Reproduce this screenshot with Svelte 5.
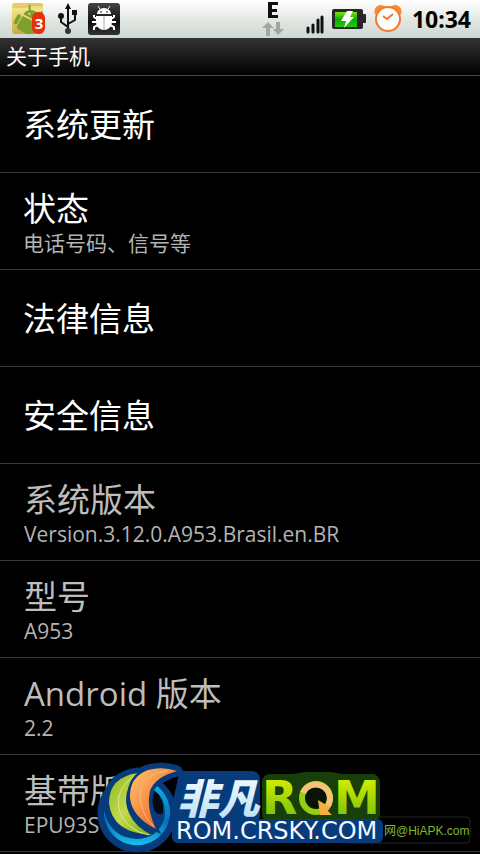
<script lang="ts">
  interface Item {
    title: string;
    summary?: string;
    info?: boolean;
  }

  const items: Item[] = [
    { title: '系统更新' },
    { title: '状态', summary: '电话号码、信号等' },
    { title: '法律信息' },
    { title: '安全信息' },
    { title: '系统版本', summary: 'Version.3.12.0.A953.Brasil.en.BR', info: true },
    { title: '型号', summary: 'A953', info: true },
    { title: 'Android 版本', summary: '2.2', info: true },
    { title: '基带版本', summary: 'EPU93ST', info: true },
  ];
</script>

<div class="phone">
  <header class="status-bar">
    <div class="notifications">
      <svg width="36" height="36" viewBox="0 0 36 36">
        <defs>
          <linearGradient id="folder" x1="0" y1="0" x2="0" y2="1">
            <stop offset="0" stop-color="#e5c65e" />
            <stop offset=".2" stop-color="#f2e489" />
            <stop offset="1" stop-color="#c8ab3c" />
          </linearGradient>
          <clipPath id="folder-clip"><rect y="2" width="31" height="31" rx="3" /></clipPath>
        </defs>
        <rect x="0" y="2" width="31" height="31" rx="3" fill="url(#folder)" />
        <path d="M1 6H14L17 4H31" fill="none" stroke="#d9b64e" />
        <g clip-path="url(#folder-clip)">
          <g fill="#819f2c" transform="rotate(28 18 20)">
            <path d="M9 17a9 8 0 0 1 18 0z" />
            <path d="M9 19h18v11a3 3 0 0 1-3 3h-12a3 3 0 0 1-3-3z" />
            <rect x="4" y="19" width="4" height="11" rx="2" />
            <path d="M13 11L10 6M22 11L25 6" stroke="#819f2c" stroke-width="2" />
            <circle cx="14" cy="14" r="1" fill="#f2e489" />
            <circle cx="21" cy="14" r="1" fill="#f2e489" />
          </g>
        </g>
        <rect x="20" y="11" width="13" height="22" rx="6" fill="#e5300b" />
        <text x="27" y="28" text-anchor="middle" class="badge">3</text>
      </svg>
      <svg width="20" height="32" viewBox="0 0 20 32" fill="none" stroke="#111" stroke-width="2">
        <path d="M10 4V28M10 24L3 19V13M10 21L17 17V11" />
        <path d="M10 0L13 6H7zM14 7h5v5h-5z" fill="#111" stroke="none" />
        <circle cx="3" cy="13" r="3" fill="#111" stroke="none" />
        <circle cx="10" cy="28" r="3" fill="#333" stroke="none" />
      </svg>
      <svg width="32" height="32" viewBox="0 0 32 32">
        <defs>
          <linearGradient id="debug" x1="0" y1="0" x2="0" y2="1">
            <stop offset="0" stop-color="#444" />
            <stop offset=".6" stop-color="#111" />
            <stop offset="1" stop-color="#333" />
          </linearGradient>
        </defs>
        <rect width="32" height="32" rx="3" fill="url(#debug)" />
        <path d="M9 11a7 6 0 0 1 14 0zM8 13h16v6a8 8 0 0 1-16 0z" fill="#fff" />
        <path d="M12 6L10 3M20 6L22 3" stroke="#fff" />
        <path d="M9 16L6 14V12M23 16L26 14V12M9 19H4M23 19H28M10 22L6 24V27M22 22L26 24V27" fill="none" stroke="#fff" stroke-width="2" />
        <path d="M16 13V27" stroke="#aaa" />
        <path d="M12 9h2M18 9h2" stroke="#222" />
      </svg>
    </div>
    <div class="system">
      <svg width="24" height="38" viewBox="0 0 24 38">
        <path d="M6 2H16V5H10V9H15V12H10V15H16V18H6z" fill="#111" />
        <path d="M6 22L12 28H8V36H4V28H0zM14 22H18V29H22L16 35L11 29H14z" fill="#a3a6a3" />
      </svg>
      <svg class="signal" width="18" height="38" viewBox="0 0 18 38" stroke="#111" stroke-width="3" stroke-linecap="round">
        <path d="M2 28V32M7 25V32M12 20V32M16 17V32" />
      </svg>
      <svg width="34" height="38" viewBox="0 0 34 38">
        <defs>
          <linearGradient id="charge" x1="0" y1="0" x2="0" y2="1">
            <stop offset="0" stop-color="#7be311" />
            <stop offset=".5" stop-color="#10a80a" />
            <stop offset="1" stop-color="#22cc09" />
          </linearGradient>
        </defs>
        <rect x="0" y="9" width="31" height="20" rx="2" fill="#292529" />
        <rect x="30" y="14" width="4" height="9" rx="1" fill="#292529" />
        <rect x="3" y="12" width="22" height="15" fill="url(#charge)" />
        <path d="M15 11H21L18 17H22L12 28L14 21H9z" fill="#fff" />
      </svg>
      <svg width="28" height="38" viewBox="0 0 28 38">
        <path d="M2 12A5 5 0 0 1 9 7zM26 12A5 5 0 0 0 19 7z" fill="#fa8a2e" stroke="#fa8a2e" stroke-width="3" />
        <circle cx="14" cy="19" r="12" fill="#fff" stroke="#f27a2c" stroke-width="2" />
        <path d="M9 16L13 19L19 14" fill="none" stroke="#f27a2c" stroke-width="2" />
      </svg>
      <time>10:34</time>
    </div>
  </header>

  <h1>关于手机</h1>

  <ul>
    {#each items as item}
      <li class:info={item.info}>
        <span class="title">{item.title}</span>
        {#if item.summary}
          <span class="summary">{item.summary}</span>
        {/if}
      </li>
    {/each}
  </ul>

  <div class="watermark">
    <svg width="384" height="96" viewBox="96 758 384 96">
      <defs>
        <linearGradient id="green" x1="0" y1="0" x2="1" y2="1">
          <stop offset="0" stop-color="#8dbb20" />
          <stop offset=".5" stop-color="#c4da50" />
          <stop offset="1" stop-color="#72a80b" />
        </linearGradient>
        <linearGradient id="orange" x1="0" y1="0" x2="1" y2="1">
          <stop offset="0" stop-color="#ffc66d" />
          <stop offset=".5" stop-color="#f58b43" />
          <stop offset="1" stop-color="#d74a10" />
        </linearGradient>
        <linearGradient id="blue" x1="0" y1="0" x2="0" y2="1">
          <stop offset="0" stop-color="#08aee6" />
          <stop offset=".6" stop-color="#0670b8" />
          <stop offset="1" stop-color="#16c1ed" />
        </linearGradient>
        <linearGradient id="ice" x1="0" y1="0" x2="0" y2="1">
          <stop offset="0" stop-color="#fff" />
          <stop offset="1" stop-color="#b4def7" />
        </linearGradient>
        <linearGradient id="lime" x1="0" y1="0" x2="0" y2="1">
          <stop offset="0" stop-color="#e5f500" />
          <stop offset="1" stop-color="#69b90b" />
        </linearGradient>
      </defs>

      <rect x="345" y="817" width="125" height="26" rx="4" fill="#000" stroke="#252525" />
      <text x="384" y="835" class="site">网@HiAPK.com</text>

      <!-- Plates behind the lettering -->
      <path d="M186 779H252V815H178z" fill="#073b7b" stroke="#073b7b" stroke-width="16" stroke-linejoin="round" />
      <path d="M270 782H294L306 780H330L342 782H372V814H270z" fill="#183e09" stroke="#183e09" stroke-width="16" stroke-linejoin="round" />
      <path d="M178 825H377V837H178z" fill="#073b7b" stroke="#073b7b" stroke-width="12" stroke-linejoin="round" />

      <!-- Swirl -->
      <g fill="#073b7b" stroke="#073b7b" stroke-width="11" stroke-linejoin="round">
        <circle cx="137" cy="813" r="34" />
        <path d="M138 773Q109 777 109 803Q112 833 152 835z" />
        <path d="M177 771Q163 766 148 770Q129 777 130 798Q132 817 156 829Q146 808 150 791Q155 777 177 771z" />
      </g>
      <path d="M156 788Q164 798 163 813Q158 816 154 810Q150 798 156 788z" fill="#050a12" />
      <path d="M157 786A33 33 0 1 1 104 811Q111 838 137 839Q158 838 164 819Q168 801 154 790z" fill="url(#blue)" />
      <path d="M138 773Q109 777 109 803Q112 833 152 835Q135 827 129 813Q120 793 138 773z" fill="url(#green)" />
      <path d="M134 776Q112 792 121 815Q129 831 149 835" fill="none" stroke="#dfe984" />
      <path
        d="M177 771Q163 766 148 770Q129 777 130 798Q132 817 156 829Q146 808 150 791Q155 777 177 771z"
        fill="url(#orange)"
        stroke="#073b7b"
        stroke-width="5"
        paint-order="stroke"
      />
      <path d="M168 771Q143 773 140 792Q139 812 154 827" fill="none" stroke="#fbb878" />

      <text x="177" y="814" class="brand-cn">非凡</text>
      <text x="262" y="814" class="brand-en">R</text>
      <text x="334" y="814" class="brand-en">M</text>
      <circle cx="316" cy="798" r="14" fill="#0a1404" stroke="#94cf10" stroke-width="6" />
      <path d="M303 793A14 14 0 1 1 327 807" fill="none" stroke="#f3c477" stroke-width="6" />
      <path d="M318 800L320 815H332L328 811L330 807z" fill="#f5ae41" />
      <text x="176" y="839" class="domain">ROM.CRSKY.COM</text>
    </svg>
  </div>
</div>

<style>
  :global(body) {
    margin: 0;
    background: #000;
  }

  .phone {
    position: relative;
    height: 100vh;
    overflow: hidden;
    background: #000;
    color: #fff;
    font-family: 'Open Sans', 'Noto Sans CJK SC', sans-serif;
  }

  .status-bar {
    display: flex;
    justify-content: space-between;
    height: 38px;
    padding: 0 9px 0 12px;
    background: linear-gradient(#fff, #dfe4df 60%, #cdd8d4);
    color: #000;
  }

  .notifications {
    display: flex;
    align-items: center;
    gap: 10px;
  }

  .system {
    display: flex;
    align-items: center;
    gap: 8px;
  }

  .signal {
    margin-left: 12px;
  }

  .badge {
    fill: #fff;
    font-size: 15px;
    font-weight: 700;
  }

  time {
    margin-left: 2px;
    font-family: 'Noto Sans', sans-serif;
    font-size: 23px;
    font-weight: 700;
    line-height: 38px;
  }

  h1 {
    box-sizing: border-box;
    height: 38px;
    margin: 0;
    padding-left: 6px;
    border-bottom: 1px solid #484848;
    background: linear-gradient(#333, #000);
    font-size: 21px;
    font-weight: 400;
    line-height: 36px;
  }

  ul {
    margin: 0;
    padding: 0;
    list-style: none;
  }

  li {
    box-sizing: border-box;
    display: flex;
    flex-direction: column;
    justify-content: center;
    height: 97px;
    padding: 2px 23px 0;
    border-bottom: 1px solid #393939;
  }

  .title {
    font-size: 33px;
    line-height: 42px;
    white-space: nowrap;
  }

  .summary {
    color: #b4b4b4;
    font-size: 21px;
    line-height: 26px;
    white-space: nowrap;
  }

  .info {
    padding-left: 24px;
  }

  .info .title {
    color: #bdbdbd;
  }

  .watermark {
    position: absolute;
    right: 0;
    bottom: 0;
  }

  .watermark svg {
    display: block;
  }

  .site {
    fill: #80b92d;
    font-family: 'Liberation Sans', 'Noto Sans CJK SC', sans-serif;
    font-size: 12px;
  }

  .brand-cn {
    fill: url(#ice);
    font-family: 'Noto Sans CJK SC', sans-serif;
    font-size: 41px;
    font-style: italic;
    font-weight: 900;
  }

  .brand-en {
    fill: url(#lime);
    font-family: 'DejaVu Sans', sans-serif;
    font-size: 46px;
    font-weight: 700;
  }

  .domain {
    fill: #f2f9ff;
    font-family: 'DejaVu Sans', sans-serif;
    font-size: 24px;
  }
</style>
